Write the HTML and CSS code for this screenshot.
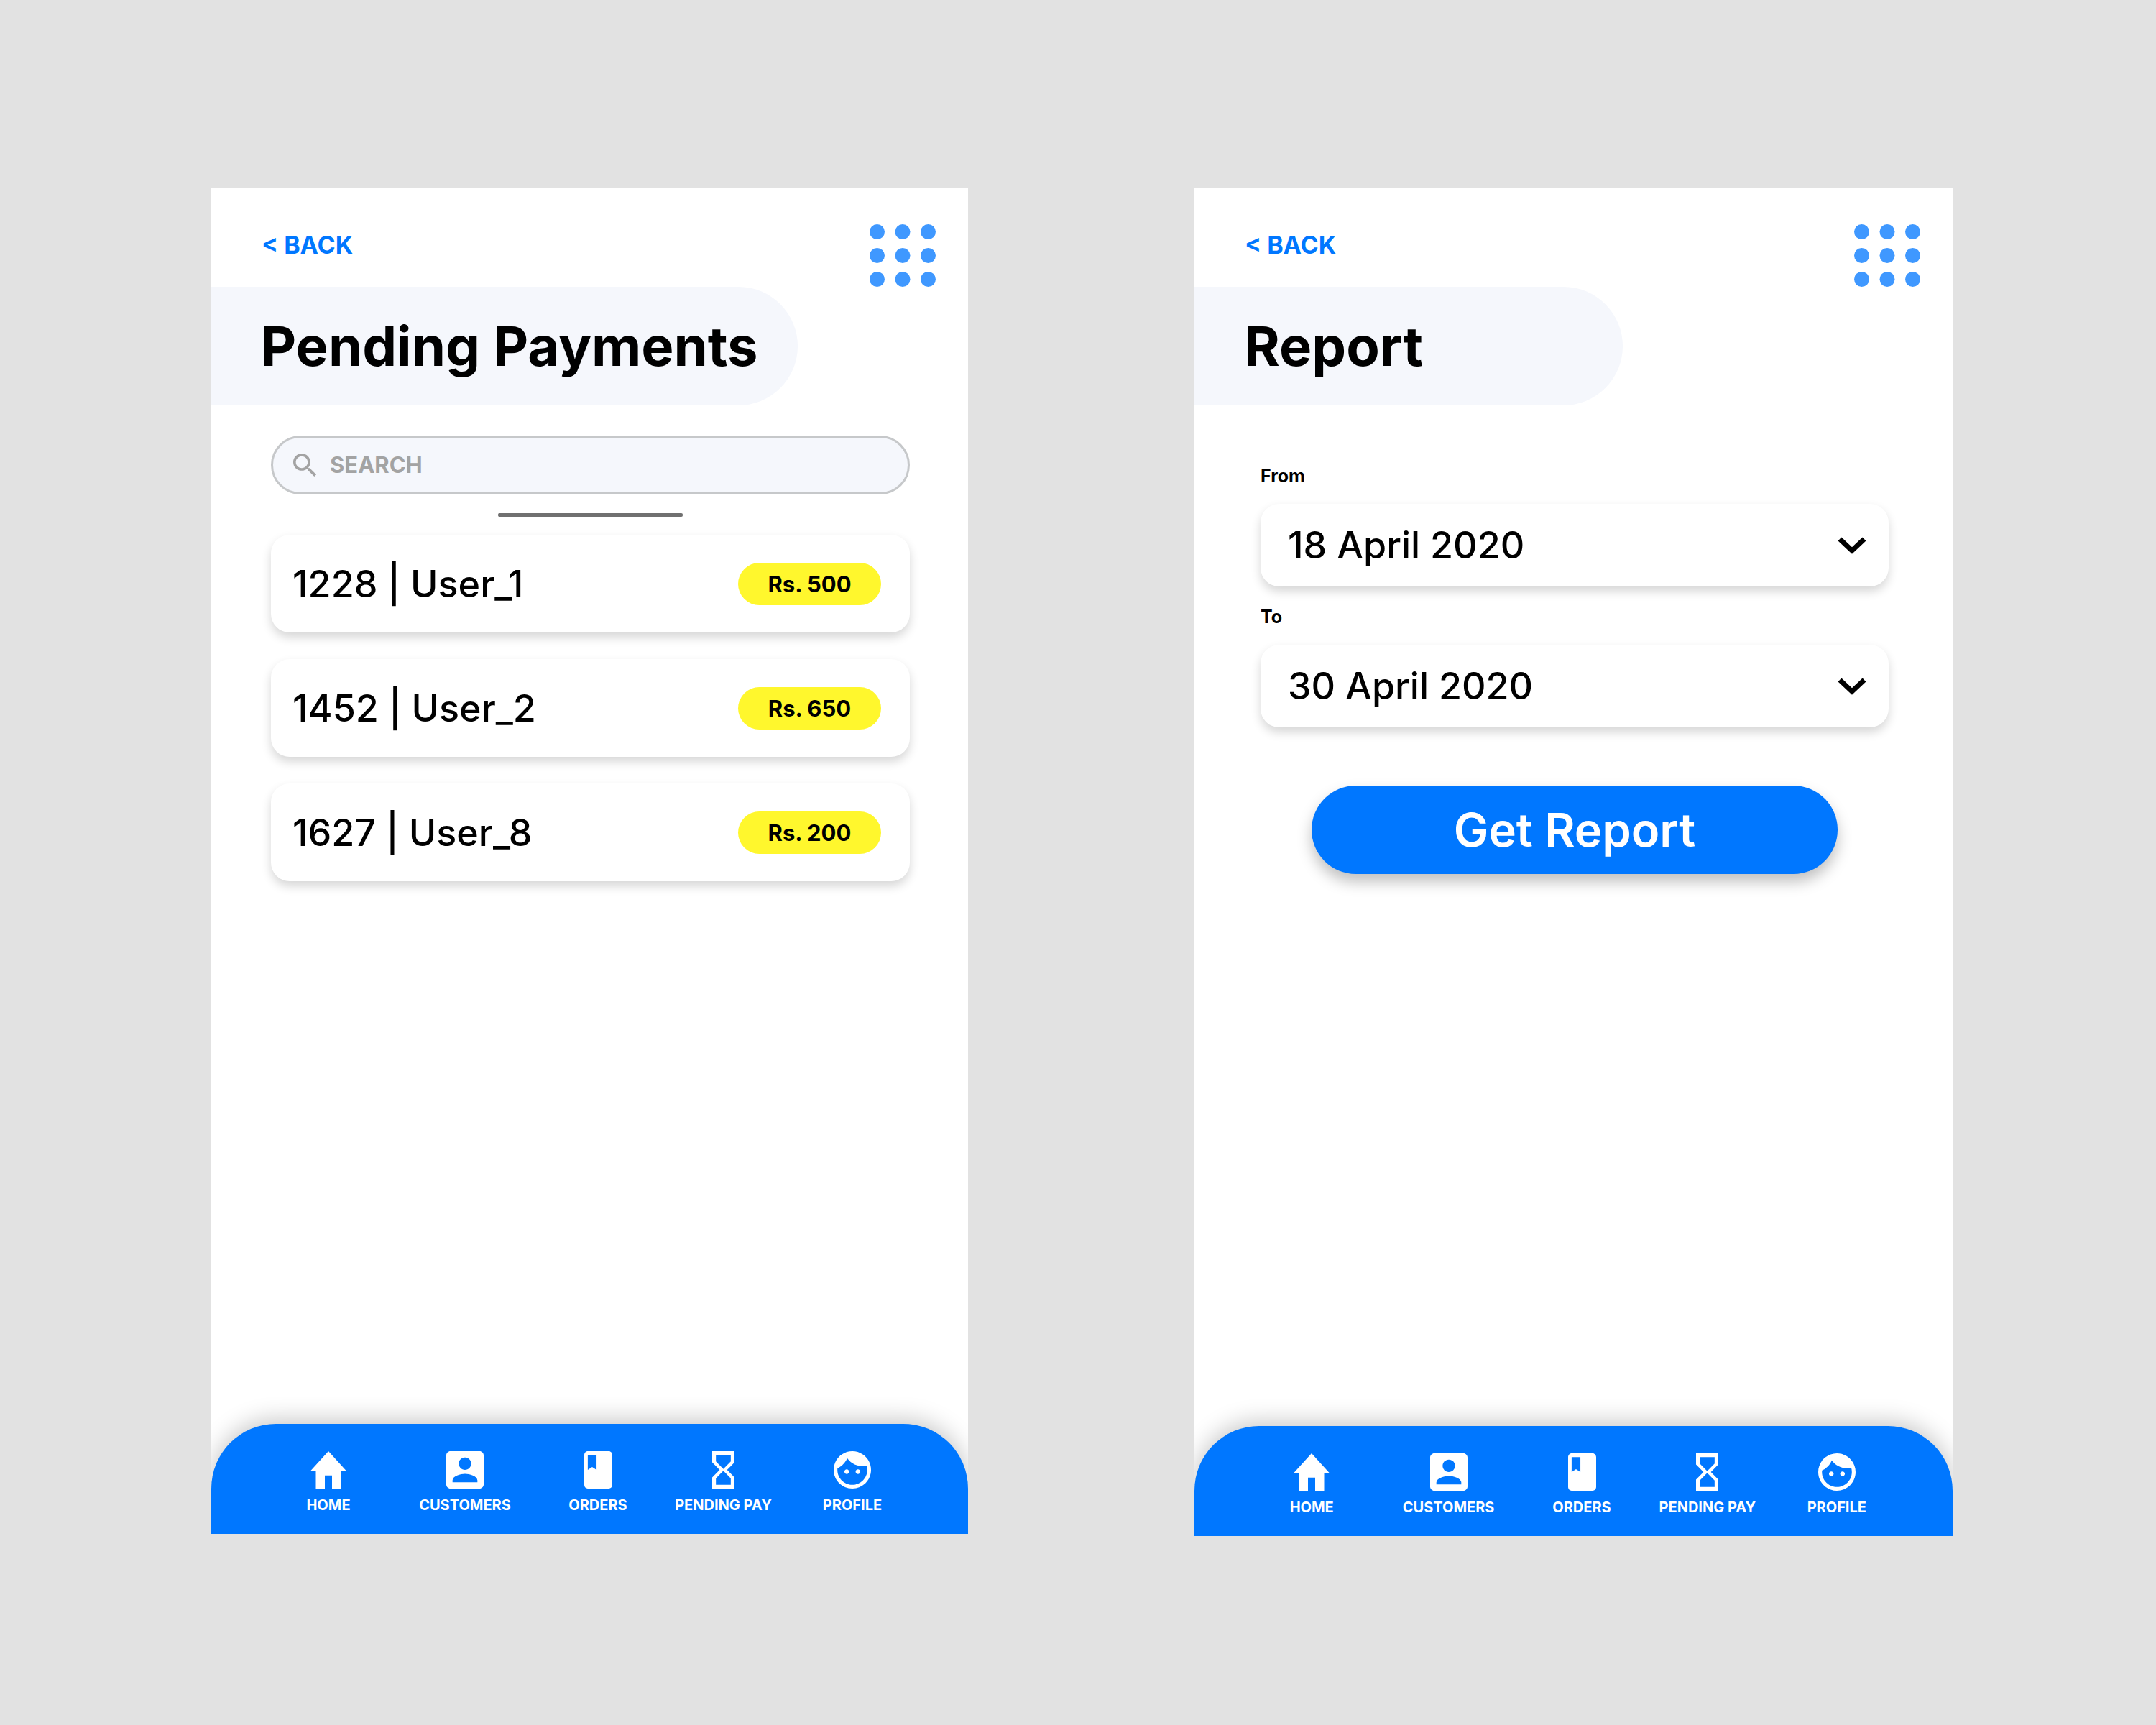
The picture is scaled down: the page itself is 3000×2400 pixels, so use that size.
FILE: index.html
```html
<!DOCTYPE html>
<html lang="en">
<head>
<meta charset="utf-8">
<meta name="viewport" content="width=device-width, initial-scale=1">
<title>Pending Payments and Report</title>
<link rel="stylesheet" href="styles.css">
</head>
<body>
<svg class="sprite" aria-hidden="true">
  <symbol id="dots" viewBox="0 0 92 87" preserveAspectRatio="none">
    <circle cx="10.5" cy="10.5" r="10.5"/><circle cx="46" cy="10.5" r="10.5"/><circle cx="81.5" cy="10.5" r="10.5"/>
    <circle cx="10.5" cy="43.5" r="10.5"/><circle cx="46" cy="43.5" r="10.5"/><circle cx="81.5" cy="43.5" r="10.5"/>
    <circle cx="10.5" cy="76.5" r="10.5"/><circle cx="46" cy="76.5" r="10.5"/><circle cx="81.5" cy="76.5" r="10.5"/>
  </symbol>
  <symbol id="home" viewBox="2 3 20 17" preserveAspectRatio="none"><path d="M10 20v-6h4v6h5v-8h3L12 3 2 12h3v8z"/></symbol>
  <symbol id="customers" viewBox="3 3 18 18" preserveAspectRatio="none"><path d="M3 5v14c0 1.100.890 2 2 2h14c1.100 0 2-.9 2-2V5c0-1.100-.9-2-2-2H5c-1.110 0-2 .9-2 2zm12 4c0 1.660-1.340 3-3 3s-3-1.340-3-3 1.340-3 3-3 3 1.340 3 3zm-9 8c0-2 4-3.100 6-3.100s6 1.100 6 3.100v1H6v-1z"/></symbol>
  <symbol id="orders" viewBox="4 2 16 20" preserveAspectRatio="none"><path d="M18 2H6c-1.100 0-2 .9-2 2v16c0 1.100.9 2 2 2h12c1.100 0 2-.9 2-2V4c0-1.100-.9-2-2-2zM6 4h5v8l-2.500-1.500L6 12V4z"/></symbol>
  <symbol id="pending" viewBox="6 2 12 20" preserveAspectRatio="none"><path d="M6 2v6l4 4-4 4v6h12v-6l-4-4 4-4V2H6zm10 14.500V20H8v-3.500l4-4 4 4zm-4-5l-4-4V4h8v3.500l-4 4z"/></symbol>
  <symbol id="profile" viewBox="2 2 20 20" preserveAspectRatio="none"><path d="M9 11.750c-.69 0-1.250.56-1.250 1.250s.56 1.250 1.250 1.250 1.250-.56 1.250-1.250-.56-1.250-1.250-1.250zm6 0c-.69 0-1.250.56-1.250 1.250s.56 1.250 1.250 1.250 1.250-.56 1.250-1.250-.56-1.250-1.250-1.250zM12 2C6.480 2 2 6.480 2 12s4.480 10 10 10 10-4.480 10-10S17.520 2 12 2zm0 18c-4.410 0-8-3.590-8-8 0-.29.02-.58.05-.86 2.360-1.050 4.230-2.980 5.210-5.370C11.070 8.330 14.050 10 17.420 10c.78 0 1.530-.09 2.250-.26.21.71.33 1.470.33 2.260 0 4.410-3.590 8-8 8z"/></symbol>
  <symbol id="search" viewBox="3 3 18 18"><path d="M15.500 14h-.79l-.28-.27C15.410 12.590 16 11.110 16 9.500 16 5.910 13.090 3 9.500 3S3 5.910 3 9.500 5.910 16 9.500 16c1.610 0 3.090-.59 4.230-1.570l.27.28v.79l5 4.990L20.490 19l-4.990-5zm-6 0C7.010 14 5 11.990 5 9.500S7.010 5 9.500 5 14 7.010 14 9.500 11.990 14 9.500 14z"/></symbol>
  <symbol id="chevron" viewBox="0 0 40 26"><path d="M3 4 20 20 37 4" fill="none" stroke="#000" stroke-width="7"/></symbol>
</svg>

<main class="stage">
  <section class="phone">
    <header class="topbar">
      <a class="back" href="#">&lt; BACK</a>
      <button class="menu" type="button" aria-label="Menu"><svg class="dots"><use href="#dots"/></svg></button>
    </header>
    <h1 class="title">Pending Payments</h1>
    <div class="content">
      <label class="search">
        <svg class="search-icon" aria-hidden="true"><use href="#search"/></svg>
        <input class="search-input" type="search" placeholder="SEARCH" aria-label="Search">
      </label>
      <hr class="handle">
      <ul class="payments">
        <li class="card payment"><span>1228 | User_1</span><span class="amount">Rs. 500</span></li>
        <li class="card payment"><span>1452 | User_2</span><span class="amount">Rs. 650</span></li>
        <li class="card payment"><span>1627 | User_8</span><span class="amount">Rs. 200</span></li>
      </ul>
    </div>
    <nav class="nav">
      <a class="nav-link" href="#"><svg class="icon icon-home"><use href="#home"/></svg>HOME</a>
      <a class="nav-link" href="#"><svg class="icon"><use href="#customers"/></svg>CUSTOMERS</a>
      <a class="nav-link" href="#"><svg class="icon icon-orders"><use href="#orders"/></svg>ORDERS</a>
      <a class="nav-link" href="#"><svg class="icon icon-pending"><use href="#pending"/></svg>PENDING PAY</a>
      <a class="nav-link" href="#"><svg class="icon"><use href="#profile"/></svg>PROFILE</a>
    </nav>
  </section>

  <section class="phone">
    <header class="topbar">
      <a class="back" href="#">&lt; BACK</a>
      <button class="menu" type="button" aria-label="Menu"><svg class="dots"><use href="#dots"/></svg></button>
    </header>
    <h1 class="title title-short">Report</h1>
    <form class="content report">
      <label class="field-label" for="from">From</label>
      <div class="card field">
        <select class="date" id="from"><option>18 April 2020</option></select>
        <svg class="chevron" aria-hidden="true"><use href="#chevron"/></svg>
      </div>
      <label class="field-label" for="to">To</label>
      <div class="card field">
        <select class="date" id="to"><option>30 April 2020</option></select>
        <svg class="chevron" aria-hidden="true"><use href="#chevron"/></svg>
      </div>
      <button class="submit" type="button">Get Report</button>
    </form>
    <nav class="nav">
      <a class="nav-link" href="#"><svg class="icon icon-home"><use href="#home"/></svg>HOME</a>
      <a class="nav-link" href="#"><svg class="icon"><use href="#customers"/></svg>CUSTOMERS</a>
      <a class="nav-link" href="#"><svg class="icon icon-orders"><use href="#orders"/></svg>ORDERS</a>
      <a class="nav-link" href="#"><svg class="icon icon-pending"><use href="#pending"/></svg>PENDING PAY</a>
      <a class="nav-link" href="#"><svg class="icon"><use href="#profile"/></svg>PROFILE</a>
    </nav>
  </section>
</main>
</body>
</html>
```
FILE: styles.css
```css
* { box-sizing: border-box; }

body {
  margin: 0;
  min-height: 100vh;
  background: #e2e2e2;
  color: #000;
  font-family: Inter, "Liberation Sans", sans-serif;
}

.sprite { position: absolute; width: 0; height: 0; }

.stage {
  display: grid;
  grid-template-columns: 1053fr 1055fr;
  column-gap: 315px;
  align-items: start;
  padding: 261px 283px 261px 294px;
}

.phone {
  display: flex;
  flex-direction: column;
  aspect-ratio: 375 / 667;
  background: #fff;
  overflow: hidden;
}

.topbar {
  display: flex;
  justify-content: space-between;
  align-items: flex-start;
  padding: 51px 45px 0 70px;
}

.back {
  color: #0077ff;
  font-size: 34px;
  font-weight: 700;
  line-height: 57px;
  text-decoration: none;
}

.menu { padding: 0; border: 0; background: none; }
.dots { display: block; width: 92px; height: 87px; fill: #3f98ff; }

.title {
  margin: 0;
  width: 816px;
  padding-left: 69px;
  border-radius: 0 83px 83px 0;
  background: #f5f7fc;
  font-size: 76px;
  font-weight: 700;
  line-height: 165px;
}
.title-short { width: 596px; }

.content { flex: 1; padding: 42px 81px 0 83px; }

.search {
  display: flex;
  align-items: center;
  gap: 18px;
  height: 82px;
  padding: 0 28px;
  border: 3px solid #c6c8ca;
  border-radius: 41px;
  background: #f5f7fc;
}
.search-icon { width: 33px; height: 33px; fill: #a3a3a3; }
.search-input {
  flex: 1;
  padding: 0;
  border: 0;
  outline: 0;
  background: none;
  font: 700 31px/40px Inter, "Liberation Sans", sans-serif;
}
.search-input::placeholder { color: #a3a3a3; opacity: 1; }

.handle {
  width: 257px;
  height: 5px;
  margin: 26px auto 25px;
  border: 0;
  border-radius: 2px;
  background: #707070;
}

.card {
  border-radius: 26px;
  background: #fff;
  box-shadow: 0 7px 14px rgba(0, 0, 0, 0.16);
}

.payments {
  display: grid;
  gap: 37px;
  margin: 0;
  padding: 0;
  list-style: none;
}
.payment {
  display: flex;
  justify-content: space-between;
  align-items: center;
  height: 136px;
  padding: 0 40px 0 30px;
  font-size: 52px;
  font-weight: 500;
}
.amount {
  width: 199px;
  border-radius: 30px;
  background: #fff72d;
  font-size: 31px;
  font-weight: 700;
  line-height: 59px;
  text-align: center;
}

.report { display: flex; flex-direction: column; padding: 82px 89px 0 92px; }
.field-label { font-size: 25px; font-weight: 700; line-height: 32px; }
.field {
  display: grid;
  align-items: center;
  margin: 23px 0 26px;
}
.date {
  grid-area: 1 / 1;
  width: 100%;
  height: 115px;
  padding: 0 90px 0 38px;
  border: 0;
  border-radius: 26px;
  appearance: none;
  background: none;
  color: #000;
  font: 500 52px/60px Inter, "Liberation Sans", sans-serif;
}
.chevron {
  grid-area: 1 / 1;
  justify-self: end;
  width: 40px;
  height: 26px;
  margin-right: 31px;
  pointer-events: none;
}
.submit {
  margin: 55px 71px 0;
  padding: 0;
  border: 0;
  border-radius: 62px;
  background: #0077ff;
  box-shadow: 0 11px 20px rgba(0, 0, 0, 0.25);
  color: #fff;
  font: 600 65px/123px Inter, "Liberation Sans", sans-serif;
}

.nav {
  display: grid;
  grid-template-columns: 188fr 192fr 178fr 171fr 188fr;
  padding: 38px 67px 26px 69px;
  border-radius: 90px 90px 0 0;
  background: #0077ff;
  box-shadow: 0 -6px 32px rgba(0, 0, 0, 0.22);
}
.nav-link {
  display: grid;
  justify-items: center;
  gap: 9px;
  color: #fff;
  font-size: 20px;
  font-weight: 700;
  line-height: 28px;
  text-decoration: none;
  white-space: nowrap;
}
.icon { width: 52px; height: 52px; fill: #fff; }
.icon-home { width: 50px; }
.icon-orders { width: 39px; }
.icon-pending { width: 31px; }
```
